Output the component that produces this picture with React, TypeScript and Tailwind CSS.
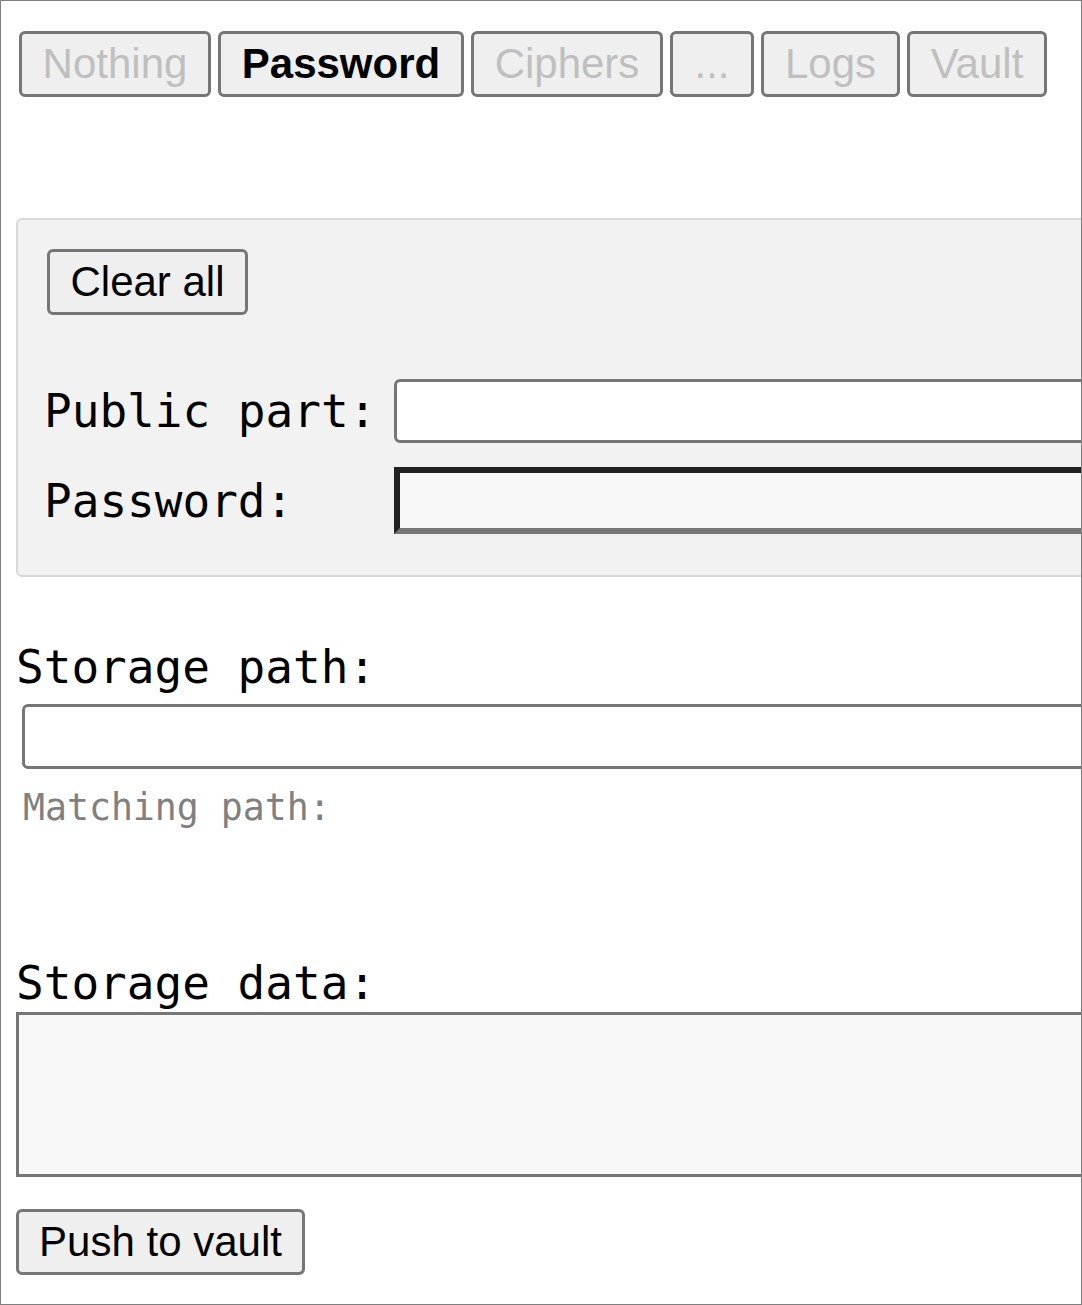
import React from "react";

const tabs: { label: string; w: string; active?: boolean }[] = [
  { label: "Nothing", w: "w-[192px]" },
  { label: "Password", w: "w-[246px]", active: true },
  { label: "Ciphers", w: "w-[192px]" },
  { label: "...", w: "w-[84px]" },
  { label: "Logs", w: "w-[139px]" },
  { label: "Vault", w: "w-[140px]" },
];

const btn =
  "h-[66px] flex items-center justify-center shrink-0 border-[3px] border-[#767676] rounded-[6px] bg-[#efefef] text-[42px] leading-[48px] font-['Liberation_Sans',Arial,sans-serif]";

export default function App() {
  return (
    <div className="w-[1082px] h-[1305px] border border-[#7f7f7f] overflow-hidden bg-white">
      <div className="flex gap-[7px] ml-[18px] mt-[30px]">
        {tabs.map((t) => (
          <button
            key={t.label}
            className={`${btn} ${t.w} ${t.active ? "text-black font-bold" : "text-[#bfbfbf]"}`}
          >
            {t.label}
          </button>
        ))}
      </div>

      <div className="ml-[15px] mt-[121px] w-[1200px] h-[359px] border-2 border-[#d9d9d9] bg-[#f2f2f2] rounded-[6px] pl-[29px] pt-[29px] font-['DejaVu_Sans_Mono',monospace] text-[46px] leading-[54px] text-black">
        <button className={`${btn} w-[201px] text-black`}>Clear all</button>
        <div className="flex items-center mt-[64px] -ml-[3px]">
          <div className="w-[350px] shrink-0 whitespace-pre">Public part:</div>
          <div className="flex-1 h-[64px] border-[3px] border-[#767676] rounded-[6px] bg-white"></div>
        </div>
        <div className="flex items-center mt-[24px] -ml-[3px]">
          <div className="w-[350px] shrink-0 whitespace-pre">Password:</div>
          <div className="flex-1 h-[67px] border-[6px] border-t-[#222222] border-l-[#222222] border-b-[#767676] border-r-[#767676] bg-[#f8f8f8]"></div>
        </div>
      </div>

      <div className="ml-[15px] mt-[63px] font-['DejaVu_Sans_Mono',monospace] text-[46px] leading-[54px] text-black whitespace-pre">
        Storage path:
      </div>
      <div className="ml-[21px] mt-[10px] w-[1200px] h-[65px] border-[3px] border-[#767676] rounded-[6px] bg-white"></div>
      <div className="ml-[22px] mt-[18px] font-['DejaVu_Sans_Mono',monospace] text-[36.5px] leading-[42px] text-[#808080] whitespace-pre">
        Matching path:
      </div>

      <div className="ml-[15px] mt-[127px] font-['DejaVu_Sans_Mono',monospace] text-[46px] leading-[54px] text-black whitespace-pre">
        Storage data:
      </div>
      <div className="ml-[15px] mt-[2px] w-[1200px] h-[165px] border-[3px] border-[#767676] bg-[#f8f8f8]"></div>

      <button className={`${btn} ml-[15px] mt-[32px] w-[289px] text-black`}>Push to vault</button>
    </div>
  );
}
